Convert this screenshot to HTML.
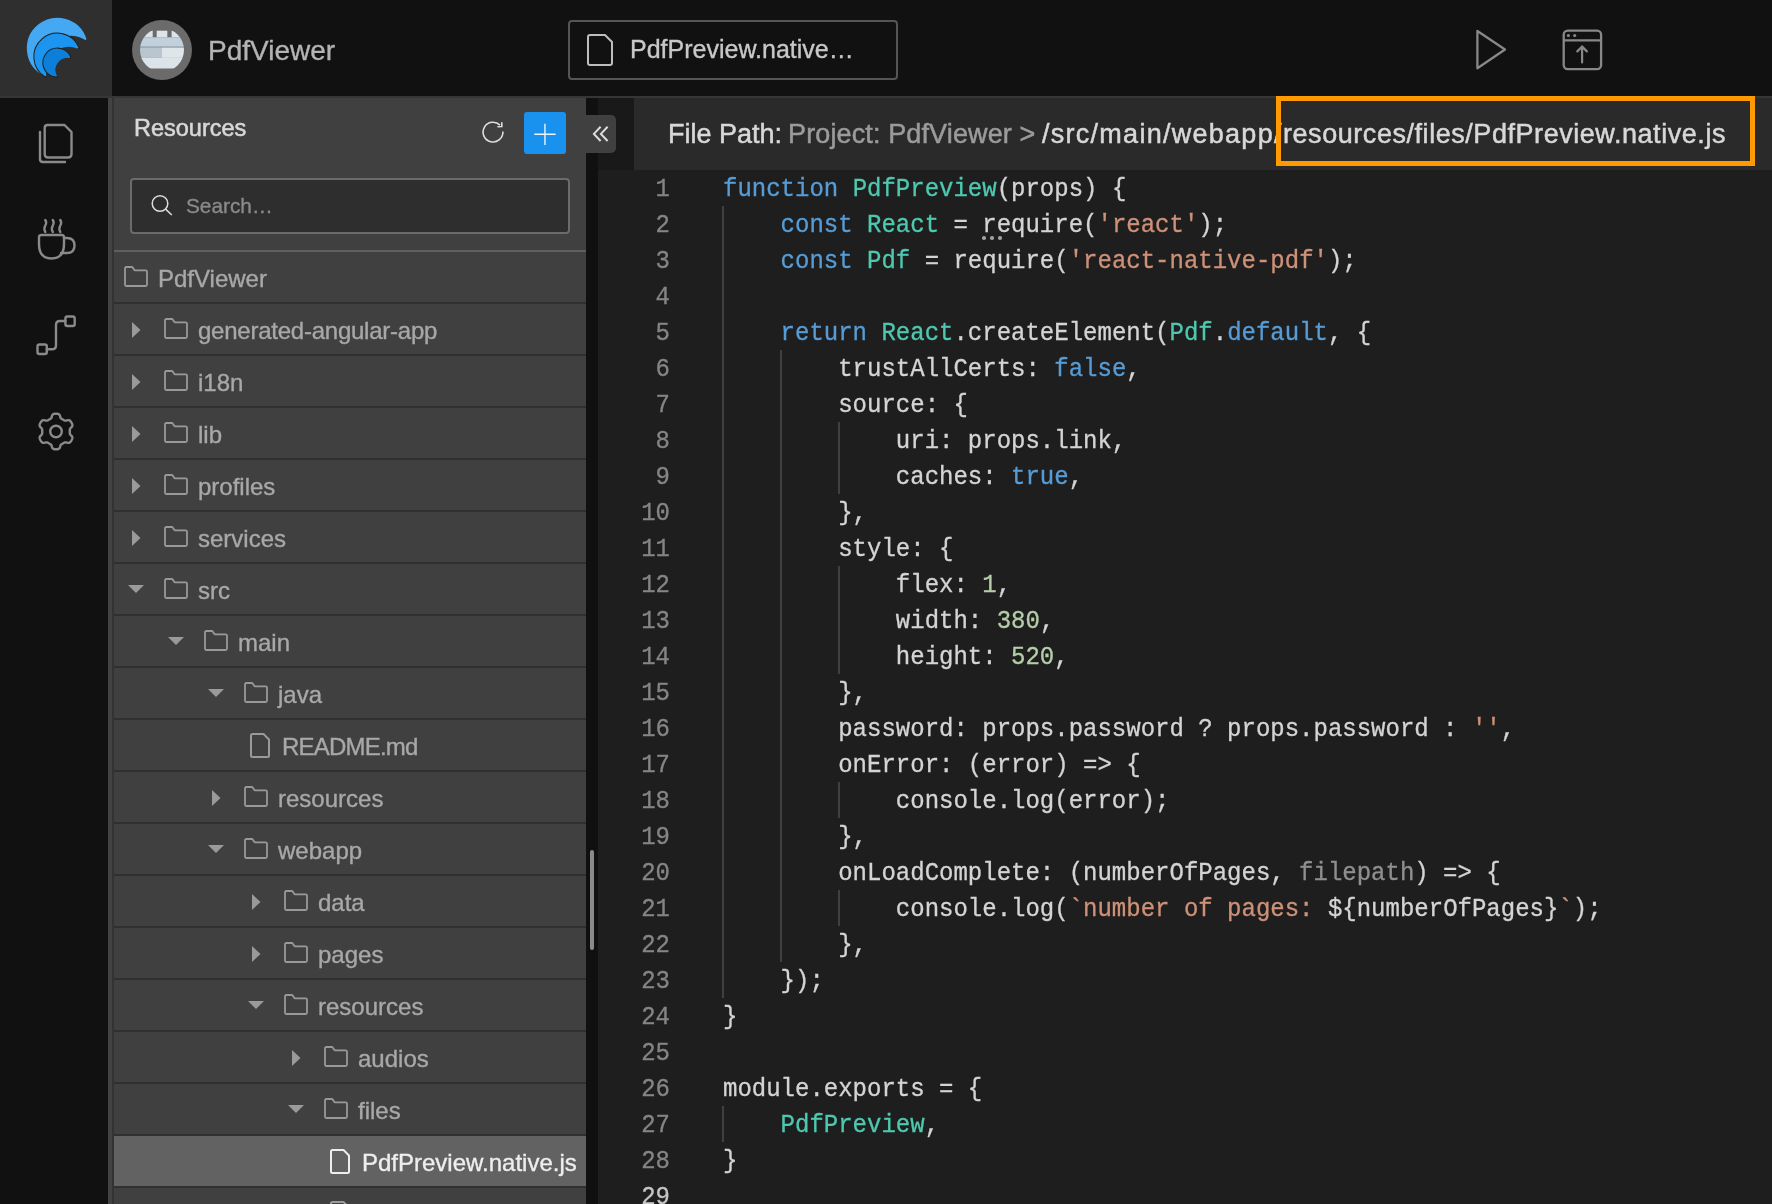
<!DOCTYPE html><html><head><meta charset="utf-8"><style>
*{margin:0;padding:0;box-sizing:border-box}
html,body{width:1772px;height:1204px;overflow:hidden;background:#1e1e1e;font-family:"Liberation Sans", sans-serif;-webkit-font-smoothing:antialiased}
.a{position:absolute}
.t{white-space:pre;font-family:"Liberation Sans", sans-serif;will-change:transform;-webkit-text-stroke:0.35px currentColor}
svg{position:absolute;overflow:visible}
.code{-webkit-text-stroke:0.3px currentColor;will-change:transform;position:absolute;left:0;top:0;font-family:"Liberation Mono", monospace;font-size:24px;line-height:36px;white-space:pre;color:#d4d4d4}
.k{color:#569cd6} .y{color:#4ec9b0} .s{color:#ce9178} .n{color:#b5cea8} .d{color:#8f8f8f}
.ln{-webkit-text-stroke:0.3px currentColor;will-change:transform;position:absolute;left:598px;width:72px;text-align:right;font-family:"Liberation Mono", monospace;font-size:24px;line-height:36px;color:#858585}
</style></head><body>
<div class="a" style="left:0;top:0;width:112px;height:96px;background:#2f2f2f"></div>
<div class="a" style="left:112px;top:0;width:1660px;height:96px;background:#111"></div>
<div class="a" style="left:0;top:96px;width:1772px;height:2px;background:#363636"></div>
<div class="a" style="left:0;top:98px;width:108px;height:1106px;background:#111"></div>
<div class="a" style="left:108px;top:98px;width:4px;height:1106px;background:#434343"></div>
<div class="a" style="left:112px;top:98px;width:2px;height:1106px;background:#333"></div>
<div class="a" style="left:114px;top:98px;width:472px;height:1106px;background:#404040"></div>
<div class="a" style="left:586px;top:98px;width:12px;height:1106px;background:#101010"></div>
<div class="a" style="left:590px;top:850px;width:4px;height:100px;border-radius:2px;background:#8a8a8a"></div>
<div class="a" style="left:598px;top:98px;width:36px;height:72px;background:#191919"></div>
<div class="a" style="left:634px;top:98px;width:1138px;height:72px;background:#2a2a2a"></div>
<svg style="left:0;top:0" width="112" height="96" viewBox="0 0 112 96">
<path d="M85.36 38.87 A29.53 29.53 0 1 0 42.26 73.69 A29.66 29.66 0 0 1 85.36 38.87 Z" fill="#45a8f2" stroke="#45a8f2" stroke-width="2" stroke-linejoin="round"/>
<path d="M78.77 48.15 A23.05 23.05 0 1 0 45.64 76.57 A23.93 23.93 0 0 1 78.77 48.15 Z" fill="#1e1e1e" stroke="#1e1e1e" stroke-width="2" stroke-linejoin="round"/>
<path d="M77.44 47.57 A22.05 22.05 0 1 0 45.28 75.16 A23.93 23.93 0 0 1 77.44 47.57 Z" fill="#1b95ef" stroke="#1b95ef" stroke-width="2" stroke-linejoin="round"/>
<path d="M70.35 57.33 A14.02 14.02 0 1 0 56.48 76.64 A12.84 12.84 0 0 1 70.35 57.33 Z" fill="#1e1e1e" stroke="#1e1e1e" stroke-width="2" stroke-linejoin="round"/>
<path d="M69.16 57.10 A13.02 13.02 0 1 0 55.88 75.58 A12.84 12.84 0 0 1 69.16 57.10 Z" fill="#0d7fd8" stroke="#0d7fd8" stroke-width="2" stroke-linejoin="round"/>
</svg>
<svg style="left:132px;top:20px" width="60" height="60" viewBox="0 0 60 60">
<defs><clipPath id="av"><circle cx="30" cy="30" r="22"/></clipPath></defs>
<circle cx="30" cy="30" r="30" fill="#6b6b6b"/>
<g clip-path="url(#av)">
<rect x="0" y="0" width="60" height="60" fill="#6b6b6b"/>
<rect x="0" y="10.7" width="60" height="6.8" fill="#dde4e9"/>
<rect x="20.7" y="8" width="4" height="9.5" fill="#6b6b6b"/>
<rect x="35.3" y="8" width="4.3" height="9.5" fill="#6b6b6b"/>
<rect x="0" y="17.4" width="60" height="9.3" fill="#c0d0dc"/>
<rect x="0" y="26.9" width="60" height="0.8" fill="#a9b6c0"/>
<rect x="0" y="27.7" width="30" height="10.2" fill="#b9c6d0"/>
<rect x="30" y="27.7" width="30" height="10.2" fill="#dfe6ea"/>
<rect x="0" y="37.9" width="60" height="10.6" fill="#dce4ea"/>
</g>
</svg>
<div class="a t" style="left:208.00px;top:37.30px;font-size:28px;line-height:28px;color:#b4b4b4;letter-spacing:0px;font-weight:400;">PdfViewer</div>
<div class="a" style="left:568px;top:20px;width:330px;height:60px;border:2px solid #555;border-radius:4px"></div>
<svg style="left:587px;top:34px" width="26" height="32" viewBox="0 0 26 32">
<path d="M3 1 H18 L25 8 V29 Q25 31 23 31 H3 Q1 31 1 29 V3 Q1 1 3 1 Z" fill="none" stroke="#bdbdbd" stroke-width="2" stroke-linejoin="round"/>
</svg>
<div class="a t" style="left:630.00px;top:36.84px;font-size:25px;line-height:25px;color:#c8c8c8;letter-spacing:0px;font-weight:400;">PdfPreview.native…</div>
<svg style="left:1470px;top:24px" width="46" height="52" viewBox="0 0 46 52">
<path d="M7.4 7 L35 25.5 L7.4 44.2 Z" fill="none" stroke="#888" stroke-width="2.3" stroke-linejoin="round"/>
</svg>
<svg style="left:1558px;top:25px" width="48" height="48" viewBox="0 0 48 48">
<rect x="5.7" y="5.7" width="37.4" height="38.4" rx="4" fill="none" stroke="#888" stroke-width="2.3"/>
<line x1="5.7" y1="15.3" x2="43.1" y2="15.3" stroke="#888" stroke-width="2.3"/>
<circle cx="10.4" cy="10.5" r="1.6" fill="#888"/><circle cx="16.7" cy="10.5" r="1.6" fill="#888"/>
<path d="M24.1 37.5 V21.6 M19.3 26.4 L24.1 21.6 L28.9 26.4" fill="none" stroke="#888" stroke-width="2.2" stroke-linecap="round"/>
</svg>
<svg style="left:0;top:98px" width="108" height="400" viewBox="0 98 108 400">
<g fill="none" stroke="#8a8a8a" stroke-width="2.4" stroke-linecap="round" stroke-linejoin="round">
<path d="M47.5 125 H64.5 L71.5 132 V154 Q71.5 157.5 68 157.5 H48 Q44.7 157.5 44.7 154 V128 Q44.7 125 47.5 125 Z"/>
<path d="M40 132 V159 Q40 162 43 162 H65"/>
<path d="M41.3 235 H61.7 Q64 235 64 237.3 V244 Q64 258.5 51.5 258.5 Q39 258.5 39 244 V237.3 Q39 235 41.3 235 Z"/>
<path d="M64 238 H67 Q74.5 238 74.5 245.5 Q74.5 253 67 253 H61"/>
<path d="M45.3 220 Q47 222.5 45.3 225.5 Q43.5 228.5 45.3 232"/>
<path d="M52.8 220 Q54.5 222.5 52.8 225.5 Q51 228.5 52.8 232"/>
<path d="M60.3 220 Q62 222.5 60.3 225.5 Q58.5 228.5 60.3 232"/>
<rect x="37.5" y="344.5" width="9.3" height="9.5" rx="2"/>
<rect x="65.4" y="316.5" width="9.3" height="9.5" rx="2"/>
<path d="M46.8 349.3 H52 Q56 349.3 56 345.3 V325 Q56 321 60 321 H65.4"/>
</g>
</svg>
<svg style="left:0;top:0" width="108" height="500" viewBox="0 0 108 500">
<path d="M56.00 413.70 L56.47 413.71 L56.93 413.74 L57.39 413.78 L57.85 413.86 L58.31 413.98 L58.75 414.15 L59.16 414.43 L59.54 414.86 L59.85 415.48 L60.09 416.24 L60.29 417.00 L60.51 417.63 L60.75 418.08 L61.03 418.39 L61.33 418.63 L61.64 418.83 L61.95 419.02 L62.27 419.19 L62.59 419.37 L62.90 419.55 L63.21 419.73 L63.52 419.92 L63.83 420.10 L64.15 420.28 L64.48 420.45 L64.83 420.59 L65.25 420.67 L65.76 420.66 L66.41 420.53 L67.17 420.33 L67.95 420.16 L68.64 420.12 L69.20 420.23 L69.65 420.45 L70.02 420.74 L70.35 421.07 L70.64 421.43 L70.92 421.81 L71.17 422.20 L71.42 422.60 L71.64 423.01 L71.85 423.42 L72.04 423.85 L72.20 424.29 L72.33 424.74 L72.40 425.21 L72.36 425.71 L72.18 426.24 L71.80 426.82 L71.26 427.41 L70.70 427.97 L70.27 428.47 L70.00 428.90 L69.86 429.30 L69.81 429.68 L69.79 430.05 L69.79 430.41 L69.79 430.78 L69.80 431.14 L69.80 431.50 L69.80 431.86 L69.79 432.22 L69.79 432.59 L69.79 432.95 L69.81 433.32 L69.86 433.70 L70.00 434.10 L70.27 434.53 L70.70 435.03 L71.26 435.59 L71.80 436.18 L72.18 436.76 L72.36 437.29 L72.40 437.79 L72.33 438.26 L72.20 438.71 L72.04 439.15 L71.85 439.58 L71.64 439.99 L71.42 440.40 L71.17 440.80 L70.92 441.19 L70.64 441.57 L70.35 441.93 L70.02 442.26 L69.65 442.55 L69.20 442.77 L68.64 442.88 L67.95 442.84 L67.17 442.67 L66.41 442.47 L65.76 442.34 L65.25 442.33 L64.83 442.41 L64.48 442.55 L64.15 442.72 L63.83 442.90 L63.52 443.08 L63.21 443.27 L62.90 443.45 L62.59 443.63 L62.27 443.81 L61.95 443.98 L61.64 444.17 L61.33 444.37 L61.03 444.61 L60.75 444.92 L60.51 445.37 L60.29 446.00 L60.09 446.76 L59.85 447.52 L59.54 448.14 L59.16 448.57 L58.75 448.85 L58.31 449.02 L57.85 449.14 L57.39 449.22 L56.93 449.26 L56.47 449.29 L56.00 449.30 L55.53 449.29 L55.07 449.26 L54.61 449.22 L54.15 449.14 L53.69 449.02 L53.25 448.85 L52.84 448.57 L52.46 448.14 L52.15 447.52 L51.91 446.76 L51.71 446.00 L51.49 445.37 L51.25 444.92 L50.97 444.61 L50.67 444.37 L50.36 444.17 L50.05 443.98 L49.73 443.81 L49.41 443.63 L49.10 443.45 L48.79 443.27 L48.48 443.08 L48.17 442.90 L47.85 442.72 L47.52 442.55 L47.17 442.41 L46.75 442.33 L46.24 442.34 L45.59 442.47 L44.83 442.67 L44.05 442.84 L43.36 442.88 L42.80 442.77 L42.35 442.55 L41.98 442.26 L41.65 441.93 L41.36 441.57 L41.08 441.19 L40.83 440.80 L40.58 440.40 L40.36 439.99 L40.15 439.58 L39.96 439.15 L39.80 438.71 L39.67 438.26 L39.60 437.79 L39.64 437.29 L39.82 436.76 L40.20 436.18 L40.74 435.59 L41.30 435.03 L41.73 434.53 L42.00 434.10 L42.14 433.70 L42.19 433.32 L42.21 432.95 L42.21 432.59 L42.21 432.22 L42.20 431.86 L42.20 431.50 L42.20 431.14 L42.21 430.78 L42.21 430.41 L42.21 430.05 L42.19 429.68 L42.14 429.30 L42.00 428.90 L41.73 428.47 L41.30 427.97 L40.74 427.41 L40.20 426.82 L39.82 426.24 L39.64 425.71 L39.60 425.21 L39.67 424.74 L39.80 424.29 L39.96 423.85 L40.15 423.42 L40.36 423.01 L40.58 422.60 L40.83 422.20 L41.08 421.81 L41.36 421.43 L41.65 421.07 L41.98 420.74 L42.35 420.45 L42.80 420.23 L43.36 420.12 L44.05 420.16 L44.83 420.33 L45.59 420.53 L46.24 420.66 L46.75 420.67 L47.17 420.59 L47.52 420.45 L47.85 420.28 L48.17 420.10 L48.48 419.92 L48.79 419.73 L49.10 419.55 L49.41 419.37 L49.73 419.19 L50.05 419.02 L50.36 418.83 L50.67 418.63 L50.97 418.39 L51.25 418.08 L51.49 417.63 L51.71 417.00 L51.91 416.24 L52.15 415.48 L52.46 414.86 L52.84 414.43 L53.25 414.15 L53.69 413.98 L54.15 413.86 L54.61 413.78 L55.07 413.74 L55.53 413.71 Z" fill="none" stroke="#8a8a8a" stroke-width="2.4" stroke-linejoin="round"/>
<circle cx="56" cy="431.5" r="5.8" fill="none" stroke="#8a8a8a" stroke-width="2.4"/>
</svg>
<div class="a t" style="left:134.00px;top:117.11px;font-size:23.5px;line-height:23.5px;color:#d8d8d8;letter-spacing:0px;font-weight:400;-webkit-text-stroke:0.55px currentColor">Resources</div>
<svg style="left:470px;top:110px" width="46" height="46" viewBox="0 0 46 46">
<path d="M32.89 21.58 A9.9 9.9 0 1 1 30.0 15.1" fill="none" stroke="#ddd" stroke-width="1.6"/>
<path d="M27.4 16.8 L31.8 16.6 L31.8 12.2" fill="none" stroke="#ddd" stroke-width="1.6"/>
</svg>
<div class="a" style="left:524px;top:112px;width:42px;height:42px;border-radius:3px;background:#1991ee"></div>
<svg style="left:524px;top:112px" width="42" height="42" viewBox="0 0 42 42"><path d="M10.3 22.3 H31.6 M20.95 11.7 V33" stroke="#eef4fa" stroke-width="1.4"/></svg>
<div class="a" style="left:586px;top:115px;width:30px;height:38px;background:#404040;border-radius:0 5px 5px 0"></div>
<svg style="left:586px;top:115px" width="30" height="38" viewBox="0 0 30 38">
<path d="M14.6 11.8 L7.9 18.9 L14.6 26 M21.6 11.8 L14.9 18.9 L21.6 26" fill="none" stroke="#ddd" stroke-width="2"/>
</svg>
<div class="a" style="left:130px;top:178px;width:440px;height:56px;border:2px solid #6b6b6b;border-radius:4px;background:#2e2e2e"></div>
<svg style="left:146px;top:190px" width="30" height="30" viewBox="0 0 30 30">
<circle cx="14" cy="13.5" r="7.8" fill="none" stroke="#ddd" stroke-width="1.5"/>
<path d="M19.6 19.1 L25.8 25" stroke="#ddd" stroke-width="1.5"/>
</svg>
<div class="a t" style="left:185.50px;top:196.39px;font-size:20.8px;line-height:20.8px;color:#8a8a8a;letter-spacing:0px;font-weight:400;">Search…</div>
<div class="a" style="left:114px;top:250px;width:472px;height:2px;background:#5f5f5f"></div>
<div class="a" style="left:114px;top:302px;width:472px;height:2px;background:#303030"></div>
<svg style="left:124px;top:265.5px" width="24" height="21" viewBox="0 0 24 21"><path d="M2.5 1 H8.3 L10.6 4.3 H21.5 Q23 4.3 23 5.8 V18.5 Q23 20 21.5 20 H2.5 Q1 20 1 18.5 V2.5 Q1 1 2.5 1 Z" fill="none" stroke="#999" stroke-width="1.8" stroke-linejoin="round"/></svg>
<div class="a t" style="left:158.00px;top:266.68px;font-size:24px;line-height:24px;color:#a8a8a8;letter-spacing:0px;font-weight:400;">PdfViewer</div>
<div class="a" style="left:114px;top:354px;width:472px;height:2px;background:#303030"></div>
<svg style="left:128px;top:316px" width="16" height="28" viewBox="0 0 16 28"><path d="M4 6 L12.5 14 L4 22 Z" fill="#9a9a9a"/></svg>
<svg style="left:164px;top:317.5px" width="24" height="21" viewBox="0 0 24 21"><path d="M2.5 1 H8.3 L10.6 4.3 H21.5 Q23 4.3 23 5.8 V18.5 Q23 20 21.5 20 H2.5 Q1 20 1 18.5 V2.5 Q1 1 2.5 1 Z" fill="none" stroke="#999" stroke-width="1.8" stroke-linejoin="round"/></svg>
<div class="a t" style="left:198.00px;top:318.68px;font-size:24px;line-height:24px;color:#a8a8a8;letter-spacing:-0.24px;font-weight:400;">generated-angular-app</div>
<div class="a" style="left:114px;top:406px;width:472px;height:2px;background:#303030"></div>
<svg style="left:128px;top:368px" width="16" height="28" viewBox="0 0 16 28"><path d="M4 6 L12.5 14 L4 22 Z" fill="#9a9a9a"/></svg>
<svg style="left:164px;top:369.5px" width="24" height="21" viewBox="0 0 24 21"><path d="M2.5 1 H8.3 L10.6 4.3 H21.5 Q23 4.3 23 5.8 V18.5 Q23 20 21.5 20 H2.5 Q1 20 1 18.5 V2.5 Q1 1 2.5 1 Z" fill="none" stroke="#999" stroke-width="1.8" stroke-linejoin="round"/></svg>
<div class="a t" style="left:198.00px;top:370.68px;font-size:24px;line-height:24px;color:#a8a8a8;letter-spacing:0px;font-weight:400;">i18n</div>
<div class="a" style="left:114px;top:458px;width:472px;height:2px;background:#303030"></div>
<svg style="left:128px;top:420px" width="16" height="28" viewBox="0 0 16 28"><path d="M4 6 L12.5 14 L4 22 Z" fill="#9a9a9a"/></svg>
<svg style="left:164px;top:421.5px" width="24" height="21" viewBox="0 0 24 21"><path d="M2.5 1 H8.3 L10.6 4.3 H21.5 Q23 4.3 23 5.8 V18.5 Q23 20 21.5 20 H2.5 Q1 20 1 18.5 V2.5 Q1 1 2.5 1 Z" fill="none" stroke="#999" stroke-width="1.8" stroke-linejoin="round"/></svg>
<div class="a t" style="left:198.00px;top:422.68px;font-size:24px;line-height:24px;color:#a8a8a8;letter-spacing:0px;font-weight:400;">lib</div>
<div class="a" style="left:114px;top:510px;width:472px;height:2px;background:#303030"></div>
<svg style="left:128px;top:472px" width="16" height="28" viewBox="0 0 16 28"><path d="M4 6 L12.5 14 L4 22 Z" fill="#9a9a9a"/></svg>
<svg style="left:164px;top:473.5px" width="24" height="21" viewBox="0 0 24 21"><path d="M2.5 1 H8.3 L10.6 4.3 H21.5 Q23 4.3 23 5.8 V18.5 Q23 20 21.5 20 H2.5 Q1 20 1 18.5 V2.5 Q1 1 2.5 1 Z" fill="none" stroke="#999" stroke-width="1.8" stroke-linejoin="round"/></svg>
<div class="a t" style="left:198.00px;top:474.68px;font-size:24px;line-height:24px;color:#a8a8a8;letter-spacing:0px;font-weight:400;">profiles</div>
<div class="a" style="left:114px;top:562px;width:472px;height:2px;background:#303030"></div>
<svg style="left:128px;top:524px" width="16" height="28" viewBox="0 0 16 28"><path d="M4 6 L12.5 14 L4 22 Z" fill="#9a9a9a"/></svg>
<svg style="left:164px;top:525.5px" width="24" height="21" viewBox="0 0 24 21"><path d="M2.5 1 H8.3 L10.6 4.3 H21.5 Q23 4.3 23 5.8 V18.5 Q23 20 21.5 20 H2.5 Q1 20 1 18.5 V2.5 Q1 1 2.5 1 Z" fill="none" stroke="#999" stroke-width="1.8" stroke-linejoin="round"/></svg>
<div class="a t" style="left:198.00px;top:526.68px;font-size:24px;line-height:24px;color:#a8a8a8;letter-spacing:0px;font-weight:400;">services</div>
<div class="a" style="left:114px;top:614px;width:472px;height:2px;background:#303030"></div>
<svg style="left:128px;top:575px" width="16" height="28" viewBox="0 0 16 28"><path d="M0 10 H16 L8 18 Z" fill="#9a9a9a"/></svg>
<svg style="left:164px;top:577.5px" width="24" height="21" viewBox="0 0 24 21"><path d="M2.5 1 H8.3 L10.6 4.3 H21.5 Q23 4.3 23 5.8 V18.5 Q23 20 21.5 20 H2.5 Q1 20 1 18.5 V2.5 Q1 1 2.5 1 Z" fill="none" stroke="#999" stroke-width="1.8" stroke-linejoin="round"/></svg>
<div class="a t" style="left:198.00px;top:578.68px;font-size:24px;line-height:24px;color:#a8a8a8;letter-spacing:0px;font-weight:400;">src</div>
<div class="a" style="left:114px;top:666px;width:472px;height:2px;background:#303030"></div>
<svg style="left:168px;top:627px" width="16" height="28" viewBox="0 0 16 28"><path d="M0 10 H16 L8 18 Z" fill="#9a9a9a"/></svg>
<svg style="left:204px;top:629.5px" width="24" height="21" viewBox="0 0 24 21"><path d="M2.5 1 H8.3 L10.6 4.3 H21.5 Q23 4.3 23 5.8 V18.5 Q23 20 21.5 20 H2.5 Q1 20 1 18.5 V2.5 Q1 1 2.5 1 Z" fill="none" stroke="#999" stroke-width="1.8" stroke-linejoin="round"/></svg>
<div class="a t" style="left:238.00px;top:630.68px;font-size:24px;line-height:24px;color:#a8a8a8;letter-spacing:0px;font-weight:400;">main</div>
<div class="a" style="left:114px;top:718px;width:472px;height:2px;background:#303030"></div>
<svg style="left:208px;top:679px" width="16" height="28" viewBox="0 0 16 28"><path d="M0 10 H16 L8 18 Z" fill="#9a9a9a"/></svg>
<svg style="left:244px;top:681.5px" width="24" height="21" viewBox="0 0 24 21"><path d="M2.5 1 H8.3 L10.6 4.3 H21.5 Q23 4.3 23 5.8 V18.5 Q23 20 21.5 20 H2.5 Q1 20 1 18.5 V2.5 Q1 1 2.5 1 Z" fill="none" stroke="#999" stroke-width="1.8" stroke-linejoin="round"/></svg>
<div class="a t" style="left:278.00px;top:682.68px;font-size:24px;line-height:24px;color:#a8a8a8;letter-spacing:0px;font-weight:400;">java</div>
<div class="a" style="left:114px;top:770px;width:472px;height:2px;background:#303030"></div>
<svg style="left:250px;top:732.5px" width="20" height="25" viewBox="0 0 20 25"><path d="M2.5 1 H13.5 L19 6.5 V22.5 Q19 24 17.5 24 H2.5 Q1 24 1 22.5 V2.5 Q1 1 2.5 1 Z" fill="none" stroke="#9a9a9a" stroke-width="2" stroke-linejoin="round"/></svg>
<div class="a t" style="left:282.00px;top:734.68px;font-size:24px;line-height:24px;color:#a8a8a8;letter-spacing:-0.8px;font-weight:400;">README.md</div>
<div class="a" style="left:114px;top:822px;width:472px;height:2px;background:#303030"></div>
<svg style="left:208px;top:784px" width="16" height="28" viewBox="0 0 16 28"><path d="M4 6 L12.5 14 L4 22 Z" fill="#9a9a9a"/></svg>
<svg style="left:244px;top:785.5px" width="24" height="21" viewBox="0 0 24 21"><path d="M2.5 1 H8.3 L10.6 4.3 H21.5 Q23 4.3 23 5.8 V18.5 Q23 20 21.5 20 H2.5 Q1 20 1 18.5 V2.5 Q1 1 2.5 1 Z" fill="none" stroke="#999" stroke-width="1.8" stroke-linejoin="round"/></svg>
<div class="a t" style="left:278.00px;top:786.68px;font-size:24px;line-height:24px;color:#a8a8a8;letter-spacing:0px;font-weight:400;">resources</div>
<div class="a" style="left:114px;top:874px;width:472px;height:2px;background:#303030"></div>
<svg style="left:208px;top:835px" width="16" height="28" viewBox="0 0 16 28"><path d="M0 10 H16 L8 18 Z" fill="#9a9a9a"/></svg>
<svg style="left:244px;top:837.5px" width="24" height="21" viewBox="0 0 24 21"><path d="M2.5 1 H8.3 L10.6 4.3 H21.5 Q23 4.3 23 5.8 V18.5 Q23 20 21.5 20 H2.5 Q1 20 1 18.5 V2.5 Q1 1 2.5 1 Z" fill="none" stroke="#999" stroke-width="1.8" stroke-linejoin="round"/></svg>
<div class="a t" style="left:278.00px;top:838.68px;font-size:24px;line-height:24px;color:#a8a8a8;letter-spacing:0px;font-weight:400;">webapp</div>
<div class="a" style="left:114px;top:926px;width:472px;height:2px;background:#303030"></div>
<svg style="left:248px;top:888px" width="16" height="28" viewBox="0 0 16 28"><path d="M4 6 L12.5 14 L4 22 Z" fill="#9a9a9a"/></svg>
<svg style="left:284px;top:889.5px" width="24" height="21" viewBox="0 0 24 21"><path d="M2.5 1 H8.3 L10.6 4.3 H21.5 Q23 4.3 23 5.8 V18.5 Q23 20 21.5 20 H2.5 Q1 20 1 18.5 V2.5 Q1 1 2.5 1 Z" fill="none" stroke="#999" stroke-width="1.8" stroke-linejoin="round"/></svg>
<div class="a t" style="left:318.00px;top:890.68px;font-size:24px;line-height:24px;color:#a8a8a8;letter-spacing:0px;font-weight:400;">data</div>
<div class="a" style="left:114px;top:978px;width:472px;height:2px;background:#303030"></div>
<svg style="left:248px;top:940px" width="16" height="28" viewBox="0 0 16 28"><path d="M4 6 L12.5 14 L4 22 Z" fill="#9a9a9a"/></svg>
<svg style="left:284px;top:941.5px" width="24" height="21" viewBox="0 0 24 21"><path d="M2.5 1 H8.3 L10.6 4.3 H21.5 Q23 4.3 23 5.8 V18.5 Q23 20 21.5 20 H2.5 Q1 20 1 18.5 V2.5 Q1 1 2.5 1 Z" fill="none" stroke="#999" stroke-width="1.8" stroke-linejoin="round"/></svg>
<div class="a t" style="left:318.00px;top:942.68px;font-size:24px;line-height:24px;color:#a8a8a8;letter-spacing:0px;font-weight:400;">pages</div>
<div class="a" style="left:114px;top:1030px;width:472px;height:2px;background:#303030"></div>
<svg style="left:248px;top:991px" width="16" height="28" viewBox="0 0 16 28"><path d="M0 10 H16 L8 18 Z" fill="#9a9a9a"/></svg>
<svg style="left:284px;top:993.5px" width="24" height="21" viewBox="0 0 24 21"><path d="M2.5 1 H8.3 L10.6 4.3 H21.5 Q23 4.3 23 5.8 V18.5 Q23 20 21.5 20 H2.5 Q1 20 1 18.5 V2.5 Q1 1 2.5 1 Z" fill="none" stroke="#999" stroke-width="1.8" stroke-linejoin="round"/></svg>
<div class="a t" style="left:318.00px;top:994.68px;font-size:24px;line-height:24px;color:#a8a8a8;letter-spacing:0px;font-weight:400;">resources</div>
<div class="a" style="left:114px;top:1082px;width:472px;height:2px;background:#303030"></div>
<svg style="left:288px;top:1044px" width="16" height="28" viewBox="0 0 16 28"><path d="M4 6 L12.5 14 L4 22 Z" fill="#9a9a9a"/></svg>
<svg style="left:324px;top:1045.5px" width="24" height="21" viewBox="0 0 24 21"><path d="M2.5 1 H8.3 L10.6 4.3 H21.5 Q23 4.3 23 5.8 V18.5 Q23 20 21.5 20 H2.5 Q1 20 1 18.5 V2.5 Q1 1 2.5 1 Z" fill="none" stroke="#999" stroke-width="1.8" stroke-linejoin="round"/></svg>
<div class="a t" style="left:358.00px;top:1046.68px;font-size:24px;line-height:24px;color:#a8a8a8;letter-spacing:0px;font-weight:400;">audios</div>
<div class="a" style="left:114px;top:1134px;width:472px;height:2px;background:#303030"></div>
<svg style="left:288px;top:1095px" width="16" height="28" viewBox="0 0 16 28"><path d="M0 10 H16 L8 18 Z" fill="#9a9a9a"/></svg>
<svg style="left:324px;top:1097.5px" width="24" height="21" viewBox="0 0 24 21"><path d="M2.5 1 H8.3 L10.6 4.3 H21.5 Q23 4.3 23 5.8 V18.5 Q23 20 21.5 20 H2.5 Q1 20 1 18.5 V2.5 Q1 1 2.5 1 Z" fill="none" stroke="#999" stroke-width="1.8" stroke-linejoin="round"/></svg>
<div class="a t" style="left:358.00px;top:1098.68px;font-size:24px;line-height:24px;color:#a8a8a8;letter-spacing:0px;font-weight:400;">files</div>
<div class="a" style="left:114px;top:1136px;width:472px;height:50px;background:#626262"></div>
<div class="a" style="left:114px;top:1186px;width:472px;height:2px;background:#303030"></div>
<svg style="left:330px;top:1148.5px" width="20" height="25" viewBox="0 0 20 25"><path d="M2.5 1 H13.5 L19 6.5 V22.5 Q19 24 17.5 24 H2.5 Q1 24 1 22.5 V2.5 Q1 1 2.5 1 Z" fill="none" stroke="#eeeeee" stroke-width="2" stroke-linejoin="round"/></svg>
<div class="a t" style="left:362.00px;top:1150.68px;font-size:24px;line-height:24px;color:#eeeeee;letter-spacing:0px;font-weight:400;">PdfPreview.native.js</div>
<div class="a" style="left:114px;top:1238px;width:472px;height:2px;background:#303030"></div>
<svg style="left:330px;top:1200.5px" width="20" height="25" viewBox="0 0 20 25"><path d="M2.5 1 H13.5 L19 6.5 V22.5 Q19 24 17.5 24 H2.5 Q1 24 1 22.5 V2.5 Q1 1 2.5 1 Z" fill="none" stroke="#9a9a9a" stroke-width="2" stroke-linejoin="round"/></svg>
<div class="a t" style="left:667.50px;top:120.64px;font-size:27px;line-height:27px;color:#d8d8d8;letter-spacing:0px;font-weight:400;-webkit-text-stroke:0.5px currentColor">File Path:</div>
<div class="a t" style="left:787.50px;top:120.64px;font-size:27px;line-height:27px;color:#9b9b9b;letter-spacing:0.13px;font-weight:400;-webkit-text-stroke:0.5px currentColor">Project: PdfViewer &gt;</div>
<div class="a t" style="left:1042.00px;top:120.64px;font-size:27px;line-height:27px;color:#d8d8d8;letter-spacing:1.27px;font-weight:400;-webkit-text-stroke:0.5px currentColor">/src/main/webapp/</div>
<div class="a t" style="left:1283.00px;top:120.64px;font-size:27px;line-height:27px;color:#d8d8d8;letter-spacing:0.55px;font-weight:400;-webkit-text-stroke:0.5px currentColor">resources/files/PdfPreview.native.js</div>
<div class="a" style="left:1276px;top:96px;width:479px;height:70px;border:5px solid #ff9a00"></div>
<div class="a" style="left:722px;top:206px;width:2px;height:792px;background:#404040"></div>
<div class="a" style="left:780px;top:350px;width:2px;height:612px;background:#404040"></div>
<div class="a" style="left:838px;top:422px;width:2px;height:72px;background:#404040"></div>
<div class="a" style="left:838px;top:566px;width:2px;height:108px;background:#404040"></div>
<div class="a" style="left:838px;top:782px;width:2px;height:36px;background:#404040"></div>
<div class="a" style="left:838px;top:890px;width:2px;height:36px;background:#404040"></div>
<div class="a" style="left:722px;top:1106px;width:2px;height:36px;background:#404040"></div>
<div class="code" style="left:722.5px;top:171.50px;transform:scaleY(1.08);transform-origin:0 24.4px"><span class="k">function</span> <span class="y">PdfPreview</span>(props) {</div>
<div class="ln" style="top:171.50px;transform:scaleY(1.08);transform-origin:0 24.4px;">1</div>
<div class="code" style="left:722.5px;top:207.50px;transform:scaleY(1.08);transform-origin:0 24.4px">    <span class="k">const</span> <span class="y">React</span> = require(<span class="s">'react'</span>);</div>
<div class="ln" style="top:207.50px;transform:scaleY(1.08);transform-origin:0 24.4px;">2</div>
<div class="code" style="left:722.5px;top:243.50px;transform:scaleY(1.08);transform-origin:0 24.4px">    <span class="k">const</span> <span class="y">Pdf</span> = require(<span class="s">'react-native-pdf'</span>);</div>
<div class="ln" style="top:243.50px;transform:scaleY(1.08);transform-origin:0 24.4px;">3</div>
<div class="ln" style="top:279.50px;transform:scaleY(1.08);transform-origin:0 24.4px;">4</div>
<div class="code" style="left:722.5px;top:315.50px;transform:scaleY(1.08);transform-origin:0 24.4px">    <span class="k">return</span> <span class="y">React</span>.createElement(<span class="y">Pdf</span>.<span class="k">default</span>, {</div>
<div class="ln" style="top:315.50px;transform:scaleY(1.08);transform-origin:0 24.4px;">5</div>
<div class="code" style="left:722.5px;top:351.50px;transform:scaleY(1.08);transform-origin:0 24.4px">        trustAllCerts: <span class="k">false</span>,</div>
<div class="ln" style="top:351.50px;transform:scaleY(1.08);transform-origin:0 24.4px;">6</div>
<div class="code" style="left:722.5px;top:387.50px;transform:scaleY(1.08);transform-origin:0 24.4px">        source: {</div>
<div class="ln" style="top:387.50px;transform:scaleY(1.08);transform-origin:0 24.4px;">7</div>
<div class="code" style="left:722.5px;top:423.50px;transform:scaleY(1.08);transform-origin:0 24.4px">            uri: props.link,</div>
<div class="ln" style="top:423.50px;transform:scaleY(1.08);transform-origin:0 24.4px;">8</div>
<div class="code" style="left:722.5px;top:459.50px;transform:scaleY(1.08);transform-origin:0 24.4px">            caches: <span class="k">true</span>,</div>
<div class="ln" style="top:459.50px;transform:scaleY(1.08);transform-origin:0 24.4px;">9</div>
<div class="code" style="left:722.5px;top:495.50px;transform:scaleY(1.08);transform-origin:0 24.4px">        },</div>
<div class="ln" style="top:495.50px;transform:scaleY(1.08);transform-origin:0 24.4px;">10</div>
<div class="code" style="left:722.5px;top:531.50px;transform:scaleY(1.08);transform-origin:0 24.4px">        style: {</div>
<div class="ln" style="top:531.50px;transform:scaleY(1.08);transform-origin:0 24.4px;">11</div>
<div class="code" style="left:722.5px;top:567.50px;transform:scaleY(1.08);transform-origin:0 24.4px">            flex: <span class="n">1</span>,</div>
<div class="ln" style="top:567.50px;transform:scaleY(1.08);transform-origin:0 24.4px;">12</div>
<div class="code" style="left:722.5px;top:603.50px;transform:scaleY(1.08);transform-origin:0 24.4px">            width: <span class="n">380</span>,</div>
<div class="ln" style="top:603.50px;transform:scaleY(1.08);transform-origin:0 24.4px;">13</div>
<div class="code" style="left:722.5px;top:639.50px;transform:scaleY(1.08);transform-origin:0 24.4px">            height: <span class="n">520</span>,</div>
<div class="ln" style="top:639.50px;transform:scaleY(1.08);transform-origin:0 24.4px;">14</div>
<div class="code" style="left:722.5px;top:675.50px;transform:scaleY(1.08);transform-origin:0 24.4px">        },</div>
<div class="ln" style="top:675.50px;transform:scaleY(1.08);transform-origin:0 24.4px;">15</div>
<div class="code" style="left:722.5px;top:711.50px;transform:scaleY(1.08);transform-origin:0 24.4px">        password: props.password ? props.password : <span class="s">''</span>,</div>
<div class="ln" style="top:711.50px;transform:scaleY(1.08);transform-origin:0 24.4px;">16</div>
<div class="code" style="left:722.5px;top:747.50px;transform:scaleY(1.08);transform-origin:0 24.4px">        onError: (error) =&gt; {</div>
<div class="ln" style="top:747.50px;transform:scaleY(1.08);transform-origin:0 24.4px;">17</div>
<div class="code" style="left:722.5px;top:783.50px;transform:scaleY(1.08);transform-origin:0 24.4px">            console.log(error);</div>
<div class="ln" style="top:783.50px;transform:scaleY(1.08);transform-origin:0 24.4px;">18</div>
<div class="code" style="left:722.5px;top:819.50px;transform:scaleY(1.08);transform-origin:0 24.4px">        },</div>
<div class="ln" style="top:819.50px;transform:scaleY(1.08);transform-origin:0 24.4px;">19</div>
<div class="code" style="left:722.5px;top:855.50px;transform:scaleY(1.08);transform-origin:0 24.4px">        onLoadComplete: (numberOfPages, <span class="d">filepath</span>) =&gt; {</div>
<div class="ln" style="top:855.50px;transform:scaleY(1.08);transform-origin:0 24.4px;">20</div>
<div class="code" style="left:722.5px;top:891.50px;transform:scaleY(1.08);transform-origin:0 24.4px">            console.log(<span class="s">`number of pages: </span>${numberOfPages}<span class="s">`</span>);</div>
<div class="ln" style="top:891.50px;transform:scaleY(1.08);transform-origin:0 24.4px;">21</div>
<div class="code" style="left:722.5px;top:927.50px;transform:scaleY(1.08);transform-origin:0 24.4px">        },</div>
<div class="ln" style="top:927.50px;transform:scaleY(1.08);transform-origin:0 24.4px;">22</div>
<div class="code" style="left:722.5px;top:963.50px;transform:scaleY(1.08);transform-origin:0 24.4px">    });</div>
<div class="ln" style="top:963.50px;transform:scaleY(1.08);transform-origin:0 24.4px;">23</div>
<div class="code" style="left:722.5px;top:999.50px;transform:scaleY(1.08);transform-origin:0 24.4px">}</div>
<div class="ln" style="top:999.50px;transform:scaleY(1.08);transform-origin:0 24.4px;">24</div>
<div class="ln" style="top:1035.50px;transform:scaleY(1.08);transform-origin:0 24.4px;">25</div>
<div class="code" style="left:722.5px;top:1071.50px;transform:scaleY(1.08);transform-origin:0 24.4px">module.exports = {</div>
<div class="ln" style="top:1071.50px;transform:scaleY(1.08);transform-origin:0 24.4px;">26</div>
<div class="code" style="left:722.5px;top:1107.50px;transform:scaleY(1.08);transform-origin:0 24.4px">    <span class="y">PdfPreview</span>,</div>
<div class="ln" style="top:1107.50px;transform:scaleY(1.08);transform-origin:0 24.4px;">27</div>
<div class="code" style="left:722.5px;top:1143.50px;transform:scaleY(1.08);transform-origin:0 24.4px">}</div>
<div class="ln" style="top:1143.50px;transform:scaleY(1.08);transform-origin:0 24.4px;">28</div>
<div class="ln" style="top:1179.50px;transform:scaleY(1.08);transform-origin:0 24.4px;color:#c6c6c6">29</div>
<div class="a" style="left:982.20px;top:236.2px;width:3.6px;height:3.6px;border-radius:50%;background:#a0a0a0"></div>
<div class="a" style="left:990.15px;top:236.2px;width:3.6px;height:3.6px;border-radius:50%;background:#a0a0a0"></div>
<div class="a" style="left:998.10px;top:236.2px;width:3.6px;height:3.6px;border-radius:50%;background:#a0a0a0"></div>
</body></html>
